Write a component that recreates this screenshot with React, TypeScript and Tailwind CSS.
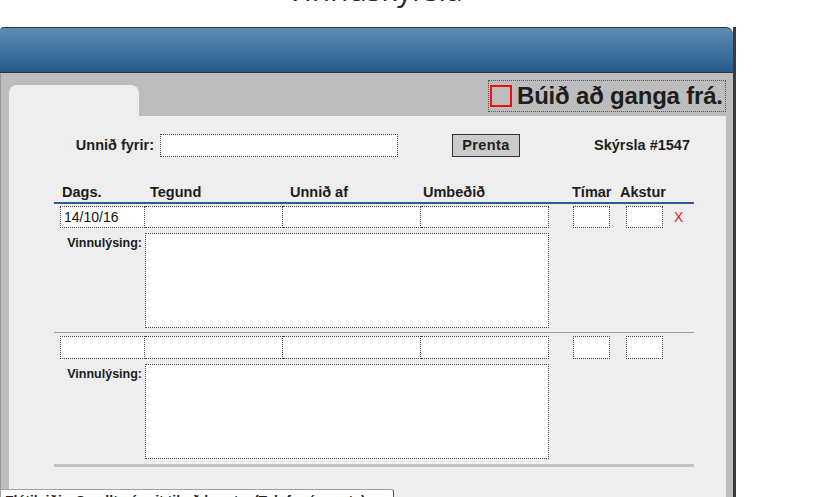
import React from "react";

// Column widths for the entry rows (px, incl. borders)
const COLS = ["w-[85px]", "w-[138px]", "w-[138px]", "w-[128px]"];

function Field({ className = "", value = "" }: { className?: string; value?: string }) {
  return (
    <input
      readOnly
      defaultValue={value}
      className={
        "h-full bg-white border border-dotted border-[#444] px-[3px] text-[14px] text-[#111] outline-none " +
        className
      }
    />
  );
}

function EntryRow({ date, last }: { date?: string; last?: boolean }) {
  return (
    <>
      <div className="flex items-center h-[22px] pl-[6px]">
        {COLS.map((w, i) => (
          <Field key={i} className={w + (i > 0 ? " border-l-0" : "")} value={i === 0 ? date : ""} />
        ))}
        <Field className="w-[37px] ml-[24px]" />
        <Field className="w-[37px] ml-[16px]" />
        {!last && <span className="ml-[11px] text-[14px] leading-none text-[#e01b1b]">X</span>}
      </div>
      <div className="flex mt-[5px] pl-[6px]">
        <div className="w-[85px] text-right pr-[3px] pt-[3px] text-[12.5px] font-bold text-[#1c1c1c] leading-[15px]">
          Vinnulýsing:
        </div>
        <textarea
          readOnly
          className="w-[404px] h-[95px] resize-none bg-white border border-dotted border-[#444] outline-none"
        />
      </div>
    </>
  );
}

export default function App() {
  return (
    <div className="relative w-[825px] h-[497px] overflow-hidden bg-white font-['Liberation_Sans',Arial,sans-serif]">
      {/* page title, scrolled mostly out of view */}
      <div className="w-[736px] h-[27px] flex items-end justify-center pl-[13px]">
        <span className="font-['Open_Sans',sans-serif] text-[30px] leading-[30px] mb-[22px] text-[#2a2a2a]">
          Vinnuskýrsla
        </span>
      </div>

      {/* panel */}
      <div className="w-[736px] h-[470px] flex flex-col border-r-[3px] border-[#3a3a3a]">
        <div className="h-[46px] shrink-0 rounded-tr-[7px] rounded-tl-[4px] border-t border-b border-[#333] bg-linear-to-b from-[#5d8db4] to-[#255a8a]" />

        <div className="flex-1 flex flex-col bg-[#bdbdbd] pl-[8px] pr-[7px] border-l border-[#9a9a9a]">
          {/* tab strip */}
          <div className="h-[43px] shrink-0 flex items-end justify-between">
            <div className="w-[130px] h-[31px] rounded-t-[8px] bg-[#eeeeee]" />
            <div className="self-start mt-[7px] w-[238px] h-[32px] border border-dotted border-[#555] flex items-center pl-[1px]">
              <div className="w-[22px] h-[22px] border-2 border-[#ee1111]" />
              <span className="ml-[5px] text-[24px] leading-none font-bold text-[#1e1e1e] tracking-[-0.2px]">
                Búið að ganga frá.
              </span>
            </div>
          </div>

          {/* content */}
          <div className="flex-1 bg-[#eeeeee] pt-[18px]">
            <div className="flex items-center h-[23px] text-[#1c1c1c]">
              <div className="w-[151px] text-right pr-[6px] text-[14.5px] font-bold">Unnið fyrir:</div>
              <Field className="w-[238px]" />
              <button className="ml-[54px] w-[68px] h-full bg-[#cbcbcb] border border-[#333] text-[14.5px] font-bold tracking-[0.4px] text-[#222]">
                Prenta
              </button>
              <div className="ml-[74px] text-[14.5px] font-bold">Skýrsla #1547</div>
            </div>

            <div className="mt-[27px] ml-[45px] w-[640px]">
              <div className="flex h-[17px] pl-[8px] text-[14.5px] leading-[17px] font-bold text-[#1c1c1c]">
                <span className="w-[88px]">Dags.</span>
                <span className="w-[140px]">Tegund</span>
                <span className="w-[133px]">Unnið af</span>
                <span className="w-[149px]">Umbeðið</span>
                <span className="w-[48px]">Tímar</span>
                <span>Akstur</span>
              </div>
              <div className="mt-[1px] h-[2px] bg-[#2b5f8e]" />

              <div className="mt-[2px]">
                <EntryRow date="14/10/16" />
              </div>
              <div className="mt-[4px] h-px bg-[#9c9c9c]" />

              <div className="mt-[3px] [&>div:first-child]:h-[23px]">
                <EntryRow last />
              </div>
              <div className="mt-[5px] h-[3px] bg-[#c2c2c2]" />
            </div>
          </div>
        </div>
      </div>

      {/* hint box at the bottom edge */}
      <div className="absolute left-0 top-[489px] w-[394px] h-[24px] bg-white border border-[#a0a0a0] border-r-[#555] rounded-tr-[3px] pl-[4px] pt-[4px] text-[14px] leading-none font-bold text-[#222] whitespace-nowrap overflow-hidden">
        Flýtileiðir: Smelltu á reit til að breyta. (Tab fer á næsta)
      </div>
    </div>
  );
}
